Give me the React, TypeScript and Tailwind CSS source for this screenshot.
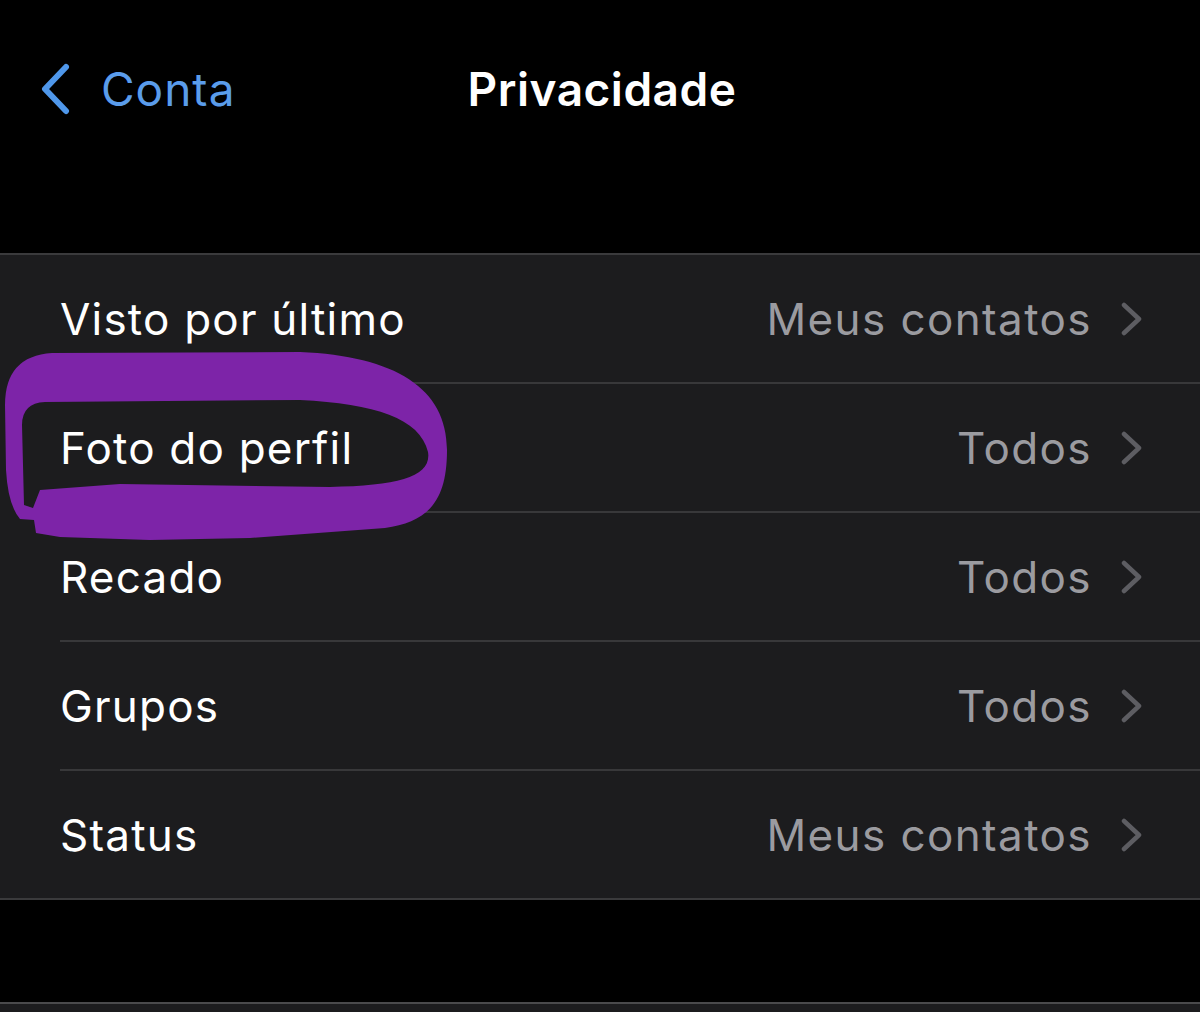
import React from "react";

const rows = [
  { label: "Visto por último", value: "Meus contatos" },
  { label: "Foto do perfil", value: "Todos" },
  { label: "Recado", value: "Todos" },
  { label: "Grupos", value: "Todos" },
  { label: "Status", value: "Meus contatos" },
];

function Chevron() {
  return (
    <svg width="22" height="36" viewBox="0 0 22 36" className="ml-[29px] shrink-0">
      <path d="M3 4 L18 18 L3 32" fill="none" stroke="#5d5d62" strokeWidth="4.5" strokeLinecap="round" strokeLinejoin="round" />
    </svg>
  );
}

export default function App() {
  return (
    <div
      className="relative w-[1200px] h-[1012px] bg-black overflow-hidden"
      style={{ fontFamily: "Inter, 'Noto Sans', sans-serif" }}
    >
      {/* Header */}
      <div className="h-[253px]">
        <div className="h-[178px] grid grid-cols-[1fr_auto_1fr] items-center">
          <div className="flex items-center pl-[40px]">
            <svg width="30" height="52" viewBox="0 0 30 52">
              <path d="M26 4 L5 26 L26 48" fill="none" stroke="#4f97ea" strokeWidth="6" strokeLinecap="round" strokeLinejoin="round" />
            </svg>
            <span className="ml-[31px] text-[46px] tracking-[1px] text-[#5a9ceb] leading-none">Conta</span>
          </div>
          <div className="text-[46px] tracking-[0.5px] font-semibold text-white leading-none pl-[4px]">Privacidade</div>
          <div />
        </div>
      </div>

      {/* Group */}
      <div className="bg-[#1c1c1e] border-t-[2px] border-b-[2px] border-[#3a3a3c]">
        {rows.map((r, i) => (
          <div key={r.label} className={`${i === 0 ? "h-[127px]" : "h-[129px]"} pl-[60px] flex`}>
            <div
              className={`flex-1 flex items-center pr-[57px] ${i > 0 ? "border-t-[2px] border-[#38383a]" : ""}`}
            >
              <span className="text-[44px] tracking-[1.2px] text-white leading-none">{r.label}</span>
              <span className="ml-auto text-[44px] tracking-[1.4px] text-[#9b9ba0] leading-none">{r.value}</span>
              <Chevron />
            </div>
          </div>
        ))}
      </div>

      <div className="h-[104px] bg-black border-b-[2px] border-[#4a4a4c]" />
      <div className="h-[20px] bg-[#1c1c1e]" />

      {/* Hand-drawn annotation */}
      <svg
        className="absolute left-0 top-0 pointer-events-none"
        width="1200"
        height="1012"
        viewBox="0 0 1200 1012"
      >
        <path
          fillRule="evenodd"
          fill="#7d24a8"
          d="M5 405 Q5 356 52 353 L300 352 C395 356 447 388 447 450 C447 505 425 522 385 528 L250 538 L150 540 L60 537 L36 533 L34 520 L20 519 Q8 505 6 470 Z
             M22 425 Q22 403 45 402 L300 400 C375 404 420 418 428 452 C432 476 400 486 330 487 L120 484 L40 490 L33 508 L24 505 Z"
        />
      </svg>
    </div>
  );
}
